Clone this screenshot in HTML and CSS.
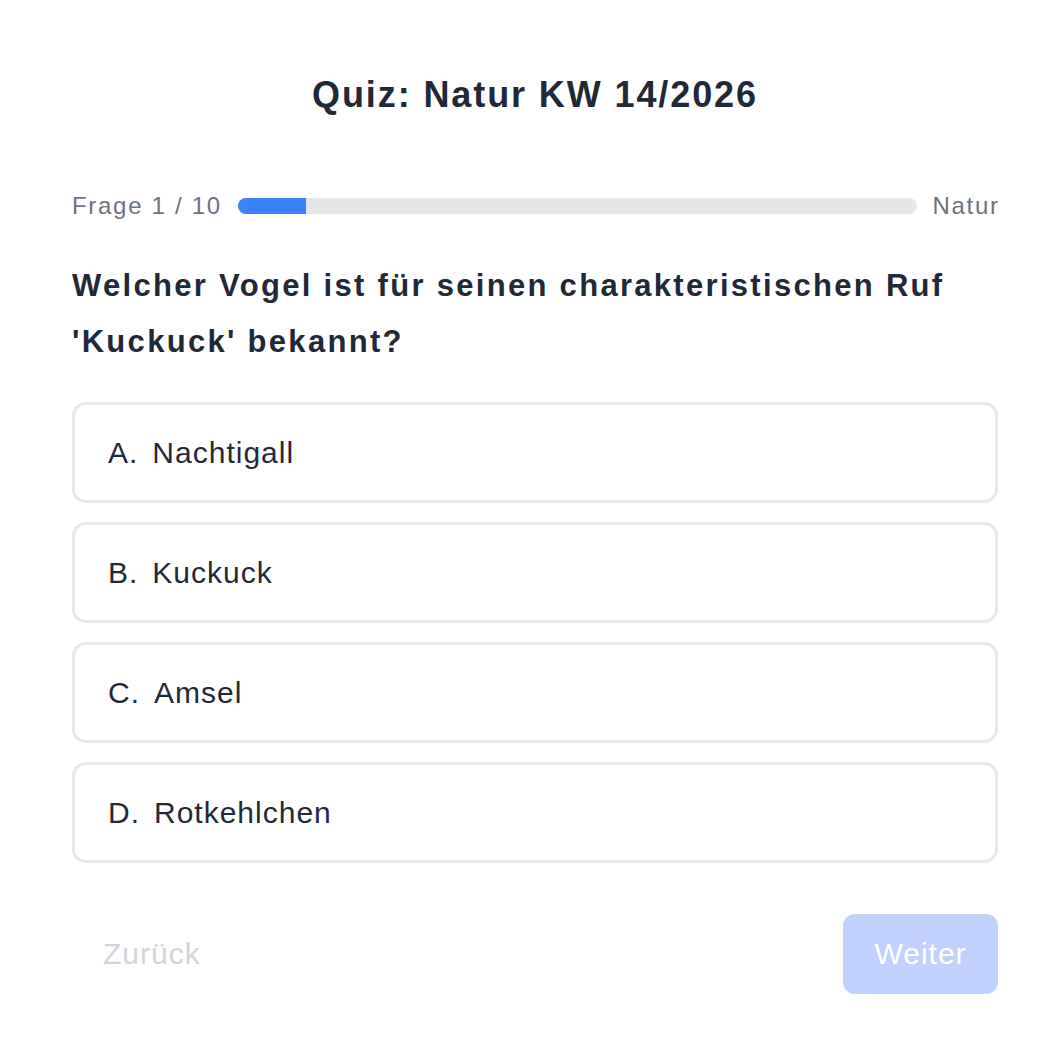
FILE: index.html
```html
<!DOCTYPE html>
<html lang="de">
<head>
<meta charset="utf-8">
<title>Quiz: Natur KW 14/2026</title>
<link rel="stylesheet" href="styles.css">
</head>
<body>
<main class="quiz">
  <h1 class="title">Quiz: Natur KW 14/2026</h1>
  <div class="progress-row">
    <span class="progress-label">Frage 1 / 10</span>
    <div class="progress-track"><div class="progress-fill" style="width:10%"></div></div>
    <span class="progress-cat">Natur</span>
  </div>
  <h2 class="question">Welcher Vogel ist für seinen charakteristischen Ruf 'Kuckuck' bekannt?</h2>
  <div class="options">
    <button class="option"><span class="letter">A.</span>Nachtigall</button>
    <button class="option"><span class="letter">B.</span>Kuckuck</button>
    <button class="option"><span class="letter">C.</span>Amsel</button>
    <button class="option"><span class="letter">D.</span>Rotkehlchen</button>
  </div>
  <div class="nav">
    <button class="btn-back" disabled>Zurück</button>
    <button class="btn-next" disabled>Weiter</button>
  </div>
</main>
</body>
</html>
```

FILE: styles.css
```css
* { box-sizing: border-box; }
html, body { margin: 0; padding: 0; background: #ffffff; }
body {
  font-family: "Liberation Sans", Arial, Helvetica, sans-serif;
  color: #1f2937;
}
.quiz {
  width: 926px;
  margin-left: 72px;
  padding-top: 72px;
}
.title {
  margin: 0;
  text-align: center;
  font-size: 36px;
  line-height: 46px;
  letter-spacing: 1.9px;
  font-weight: 700;
  color: #1f2937;
}
.progress-row {
  display: flex;
  align-items: center;
  gap: 16px;
  margin-top: 64px;
  height: 48px;
}
.progress-label, .progress-cat {
  font-size: 24px;
  letter-spacing: 1.7px;
  color: #6b7280;
  white-space: nowrap;
}
.progress-cat { margin-right: -1.7px; }
.progress-track {
  flex: 1;
  height: 16px;
  background: #e5e7eb;
  border-radius: 8px;
  overflow: hidden;
}
.progress-fill {
  height: 100%;
  background: #3b82f6;
}
.question {
  margin: 28px 0 0;
  font-size: 31px;
  line-height: 56px;
  letter-spacing: 2.3px;
  font-weight: 700;
  color: #1f2937;
}
.options {
  display: flex;
  flex-direction: column;
  gap: 19px;
  margin-top: 32px;
}
.option {
  display: flex;
  align-items: center;
  height: 101px;
  padding: 0 0 0 33px;
  background: #fff;
  border: 3px solid #e5e7eb;
  border-radius: 14px;
  font-family: inherit;
  font-size: 30px;
  letter-spacing: 1px;
  color: #1f2937;
  text-align: left;
}
.letter { margin-right: 14px; }
.nav {
  display: flex;
  justify-content: space-between;
  align-items: center;
  margin-top: 51px;
}
.btn-back {
  background: none;
  border: none;
  font-family: inherit;
  font-size: 30px;
  letter-spacing: 1px;
  color: #d1d5db;
  padding: 0 31px;
  height: 80px;
}
.btn-next {
  background: #bfd1fc;
  border: none;
  border-radius: 12px;
  font-family: inherit;
  font-size: 30px;
  letter-spacing: 1px;
  color: #ffffff;
  width: 155px;
  height: 80px;
}
```
